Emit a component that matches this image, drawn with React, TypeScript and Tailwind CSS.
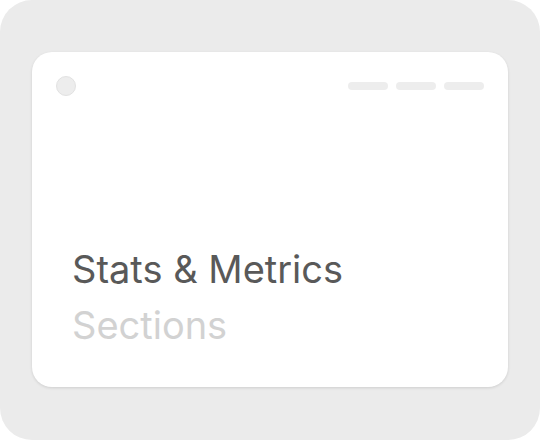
import React from "react";

const App: React.FC = () => {
  return (
    <div className="w-[540px] h-[440px] bg-white">
      <div className="w-full h-full rounded-[32px] bg-[#ebebeb] pt-[52px] px-[32px]">
        <div
          className="flex flex-col w-[476px] h-[335px] rounded-[20px] bg-white shadow-[0_1px_3px_rgba(0,0,0,0.12)] pt-6 px-6 pb-[34px]"
          style={{ fontFamily: 'Inter, "Liberation Sans", Arial, sans-serif' }}
        >
          <div className="flex items-center justify-between">
            <div className="w-5 h-5 rounded-full bg-[#ededed] border border-[#e2e2e2]" />
            <div className="flex gap-2">
              <div className="w-10 h-2 rounded-full bg-[#ededed]" />
              <div className="w-10 h-2 rounded-full bg-[#ededed]" />
              <div className="w-10 h-2 rounded-full bg-[#ededed]" />
            </div>
          </div>
          <div className="flex-1" />
          <div className="pl-4 text-[38px] leading-[56px]">
            <div className="text-[#595959]">Stats &amp; Metrics</div>
            <div className="text-[#d2d2d2]">Sections</div>
          </div>
        </div>
      </div>
    </div>
  );
};

export default App;
